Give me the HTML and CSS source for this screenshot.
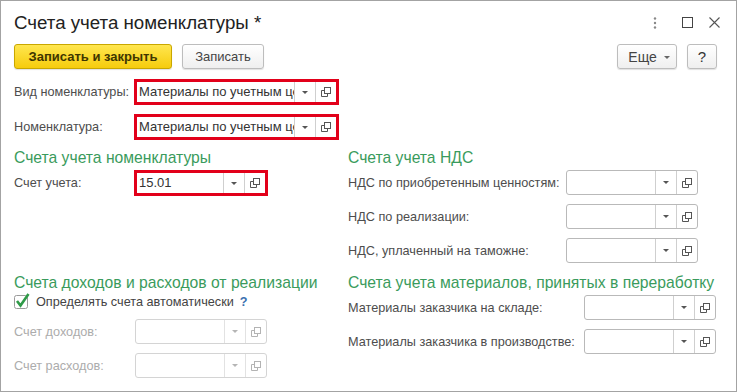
FILE: index.html
```html
<!DOCTYPE html>
<html lang="ru">
<head>
    <meta charset="UTF-8">
    <title>Счета учета номенклатуры</title>
    <link rel="stylesheet" href="styles.css">
</head>
<body>
<div class="window">
    <div class="titlebar">
        <h1>Счета учета номенклатуры *</h1>
        <div class="win-controls">
            <svg width="4" height="12" viewBox="0 0 4 12"><circle cx="2" cy="1.5" r="1.2"/><circle cx="2" cy="6" r="1.2"/><circle cx="2" cy="10.5" r="1.2"/></svg>
            <svg width="11" height="11" viewBox="0 0 11 11"><rect x="0.5" y="0.5" width="10" height="10" fill="none" stroke="#444"/></svg>
            <svg width="11" height="11" viewBox="0 0 11 11"><path d="M0.5 0.5 L10.5 10.5 M10.5 0.5 L0.5 10.5" stroke="#555" stroke-width="1.1"/></svg>
        </div>
    </div>

    <div class="toolbar">
        <button class="btn btn-main">Записать и закрыть</button>
        <button class="btn btn-plain">Записать</button>
        <div class="spacer"></div>
        <button class="btn btn-more">Еще <span class="arrow"></span></button>
        <button class="btn btn-help">?</button>
    </div>

    <div class="row first">
        <div class="label w-top">Вид номенклатуры:</div>
        <div class="field marked long">
            <div class="value">Материалы по учетным ценам</div>
            <div class="fbtn drop"><span class="arrow"></span></div>
            <div class="fbtn open"><svg width="10" height="10" viewBox="0 0 10 10"><rect x="3.5" y="0.5" width="6" height="6"/><path d="M3.5 3.5 H0.5 V9.5 H6.5 V6.5"/></svg></div>
        </div>
    </div>
    <div class="row">
        <div class="label w-top">Номенклатура:</div>
        <div class="field marked long">
            <div class="value">Материалы по учетным ценам</div>
            <div class="fbtn drop"><span class="arrow"></span></div>
            <div class="fbtn open"><svg width="10" height="10" viewBox="0 0 10 10"><rect x="3.5" y="0.5" width="6" height="6"/><path d="M3.5 3.5 H0.5 V9.5 H6.5 V6.5"/></svg></div>
        </div>
    </div>

    <div class="columns">
        <div class="group">
            <div class="group-title">Счета учета номенклатуры</div>
            <div class="row tight">
                <div class="label w-top">Счет учета:</div>
                <div class="field marked">
                    <div class="value">15.01</div>
                    <div class="fbtn drop"><span class="arrow"></span></div>
                    <div class="fbtn open"><svg width="10" height="10" viewBox="0 0 10 10"><rect x="3.5" y="0.5" width="6" height="6"/><path d="M3.5 3.5 H0.5 V9.5 H6.5 V6.5"/></svg></div>
                </div>
            </div>
        </div>

        <div class="group">
            <div class="group-title">Счета учета НДС</div>
            <div class="row tight">
                <div class="label w-vat">НДС по приобретенным ценностям:</div>
                <div class="field">
                    <div class="value"></div>
                    <div class="fbtn drop"><span class="arrow"></span></div>
                    <div class="fbtn open"><svg width="10" height="10" viewBox="0 0 10 10"><rect x="3.5" y="0.5" width="6" height="6"/><path d="M3.5 3.5 H0.5 V9.5 H6.5 V6.5"/></svg></div>
                </div>
            </div>
            <div class="row">
                <div class="label w-vat">НДС по реализации:</div>
                <div class="field">
                    <div class="value"></div>
                    <div class="fbtn drop"><span class="arrow"></span></div>
                    <div class="fbtn open"><svg width="10" height="10" viewBox="0 0 10 10"><rect x="3.5" y="0.5" width="6" height="6"/><path d="M3.5 3.5 H0.5 V9.5 H6.5 V6.5"/></svg></div>
                </div>
            </div>
            <div class="row">
                <div class="label w-vat">НДС, уплаченный на таможне:</div>
                <div class="field">
                    <div class="value"></div>
                    <div class="fbtn drop"><span class="arrow"></span></div>
                    <div class="fbtn open"><svg width="10" height="10" viewBox="0 0 10 10"><rect x="3.5" y="0.5" width="6" height="6"/><path d="M3.5 3.5 H0.5 V9.5 H6.5 V6.5"/></svg></div>
                </div>
            </div>
        </div>

        <div class="group lower">
            <div class="group-title">Счета доходов и расходов от реализации</div>
            <div class="check-row">
                <svg class="checkbox" width="18" height="16" viewBox="0 0 18 16">
                    <rect x="0.5" y="2.5" width="13" height="13" rx="2" fill="#fff" stroke="#9a9a9a"/>
                    <path d="M3 8 L6.5 12.5 L14.5 1" fill="none" stroke="#2f9a48" stroke-width="2.6"/>
                </svg>
                <span class="check-label">Определять счета автоматически</span>
                <span class="hint">?</span>
            </div>
            <div class="row">
                <div class="label w-top disabled">Счет доходов:</div>
                <div class="field off">
                    <div class="value"></div>
                    <div class="fbtn drop"><span class="arrow"></span></div>
                    <div class="fbtn open"><svg width="10" height="10" viewBox="0 0 10 10"><rect x="3.5" y="0.5" width="6" height="6"/><path d="M3.5 3.5 H0.5 V9.5 H6.5 V6.5"/></svg></div>
                </div>
            </div>
            <div class="row">
                <div class="label w-top disabled">Счет расходов:</div>
                <div class="field off">
                    <div class="value"></div>
                    <div class="fbtn drop"><span class="arrow"></span></div>
                    <div class="fbtn open"><svg width="10" height="10" viewBox="0 0 10 10"><rect x="3.5" y="0.5" width="6" height="6"/><path d="M3.5 3.5 H0.5 V9.5 H6.5 V6.5"/></svg></div>
                </div>
            </div>
        </div>

        <div class="group lower">
            <div class="group-title">Счета учета материалов, принятых в переработку</div>
            <div class="row tight">
                <div class="label w-mat">Материалы заказчика на складе:</div>
                <div class="field">
                    <div class="value"></div>
                    <div class="fbtn drop"><span class="arrow"></span></div>
                    <div class="fbtn open"><svg width="10" height="10" viewBox="0 0 10 10"><rect x="3.5" y="0.5" width="6" height="6"/><path d="M3.5 3.5 H0.5 V9.5 H6.5 V6.5"/></svg></div>
                </div>
            </div>
            <div class="row">
                <div class="label w-mat">Материалы заказчика в производстве:</div>
                <div class="field">
                    <div class="value"></div>
                    <div class="fbtn drop"><span class="arrow"></span></div>
                    <div class="fbtn open"><svg width="10" height="10" viewBox="0 0 10 10"><rect x="3.5" y="0.5" width="6" height="6"/><path d="M3.5 3.5 H0.5 V9.5 H6.5 V6.5"/></svg></div>
                </div>
            </div>
        </div>
    </div>
</div>
</body>
</html>
```

FILE: styles.css
```css
body {
    margin: 0;
    font-family: "Liberation Sans", Arial, sans-serif;
    font-size: 12.7px;
    color: #4d4d4d;
    background: #fff;
}
.window {
    width: 737px;
    height: 392px;
    box-sizing: border-box;
    border: 1px solid #a3a3a3;
    padding: 0 19px 0 13px;
    overflow: hidden;
}
.titlebar {
    height: 43px;
    display: flex;
    align-items: center;
}
h1 {
    margin: 0;
    font-size: 18.7px;
    font-weight: normal;
    color: #222;
    flex: 1;
}
.win-controls {
    display: flex;
    align-items: center;
    margin-right: -3px;
}
.win-controls svg {
    fill: #888;
}
.win-controls svg:nth-child(1) { margin-right: 25px; }
.win-controls svg:nth-child(2) { margin-right: 16px; }

.toolbar {
    display: flex;
    height: 25px;
    gap: 10px;
}
.spacer {
    flex: 1;
}
.btn {
    font-family: inherit;
    font-size: 13px;
    height: 25px;
    border-radius: 3px;
    padding: 0 12px;
    cursor: pointer;
    border: 1px solid #bdbdbd;
    background: linear-gradient(#ffffff, #efefef);
    color: #444;
    box-shadow: 0 1px 1px rgba(0, 0, 0, 0.12);
}
.btn-main {
    width: 158px;
    font-weight: bold;
    color: #3f3500;
    border-color: #c9a700;
    background: linear-gradient(#ffe64f, #f6cc0d);
}
.btn-plain {
    width: 82px;
}
.btn-more {
    width: 60px;
    padding: 0 6px 0 10px;
    font-size: 14px;
}
.btn-help {
    width: 30px;
    padding: 0;
    font-size: 15px;
    color: #333;
}
.arrow {
    display: inline-block;
    width: 0;
    height: 0;
    border-left: 3px solid transparent;
    border-right: 3px solid transparent;
    border-top: 3px solid #666;
    vertical-align: middle;
    margin-left: 3px;
}

.row {
    display: flex;
    align-items: center;
    margin-top: 9px;
}
.row.first {
    margin-top: 10px;
}
.row.tight {
    margin-top: 2px;
}
.label {
    flex: none;
    white-space: nowrap;
}
.label.disabled {
    color: #acacac;
}
.w-top { width: 121px; }
.w-vat { width: 218px; }
.w-mat { width: 236px; }

.field {
    display: flex;
    width: 132px;
    height: 25px;
    box-sizing: border-box;
    border: 1px solid #b9b9b9;
    border-radius: 3px;
    background: #fff;
}
.field.marked {
    width: 134px;
    height: 26px;
    border: 3px solid #e2001a;
    border-radius: 0;
    margin-left: -1px;
}
.field.long {
    width: 205px;
}
.field.off {
    border-color: #d4d4d4;
}
.value {
    flex: 1;
    min-width: 0;
    overflow: hidden;
    white-space: nowrap;
    padding-left: 2px;
    line-height: 20px;
    font-size: 13px;
    color: #333;
}
.field:not(.marked) .value {
    line-height: 23px;
}
.fbtn {
    flex: none;
    width: 20px;
    border-left: 1px solid #cfcfcf;
    display: flex;
    align-items: center;
    justify-content: center;
}
.fbtn .arrow {
    margin: 0;
    border-top-color: #555;
}
.fbtn svg {
    fill: none;
    stroke: #555;
}
.field.off .fbtn {
    border-left-color: #e2e2e2;
}
.field.off .arrow {
    border-top-color: #b5b5b5;
}
.field.off svg {
    stroke: #b3b3b3;
}

.columns {
    display: grid;
    grid-template-columns: 334px 1fr;
    margin-top: 8px;
}
.group.lower {
    margin-top: 10px;
}
.group-title {
    font-size: 15.7px;
    line-height: 20px;
    color: #3a9b5c;
    white-space: nowrap;
}
.check-row {
    display: flex;
    align-items: center;
    height: 16px;
    margin-top: 1px;
}
.checkbox {
    margin-right: 4px;
    margin-top: -2px;
}
.check-label {
    color: #444;
}
.hint {
    margin-left: 6px;
    color: #3b70b0;
    font-weight: bold;
}
```
